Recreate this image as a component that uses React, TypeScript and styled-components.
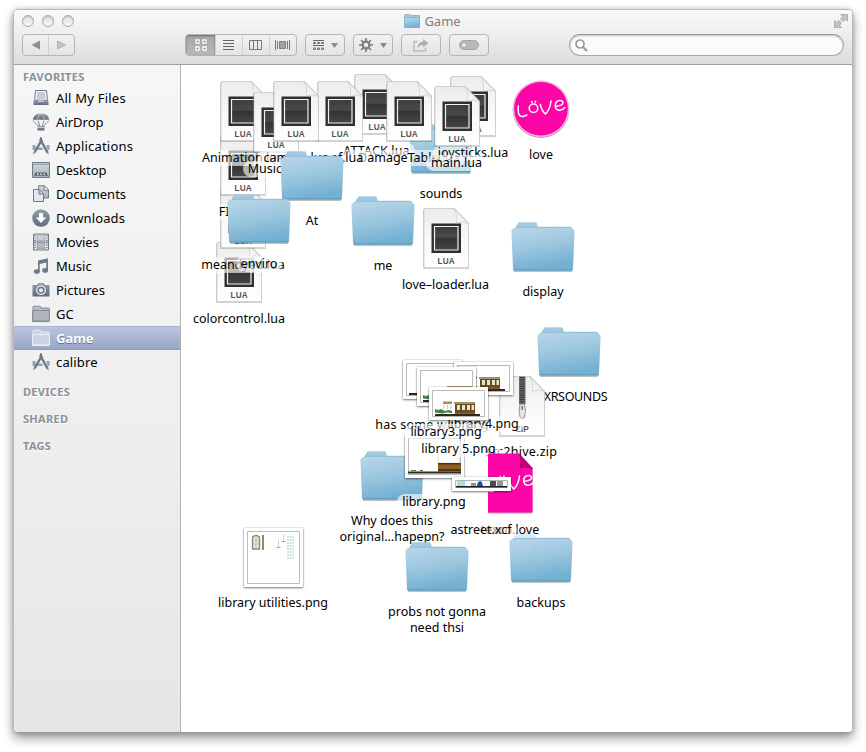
import React from "react";
import styled, { createGlobalStyle, css } from "styled-components";

const Global = createGlobalStyle`
  * { box-sizing: border-box; }
  body { margin: 0; background: #fff; overflow: hidden; font-family: "Noto Sans", "Open Sans", sans-serif; }
  svg { display: block; flex: none; }
`;

const Desktop = styled.div`
  width: 866px;
  height: 752px;
  padding: 9px 13px 19px;
  background: #fff;
`;
const Window = styled.div`
  height: 724px;
  display: flex;
  flex-direction: column;
  border: 1px solid #b9b9b9;
  border-bottom-color: #999;
  border-radius: 5px;
  overflow: hidden;
  box-shadow: 0 5px 11px rgba(0, 0, 0, 0.42), 0 0 4px rgba(0, 0, 0, 0.16);
`;
const Header = styled.header`
  height: 55px;
  flex: none;
  display: flex;
  flex-direction: column;
  background: linear-gradient(#fafafa, #eeeeee 45%, #dcdcdc);
  border-bottom: 1px solid #a0a0a0;
`;
const TitleBar = styled.div`
  height: 24px;
  display: grid;
  grid-template-columns: 1fr auto 1fr;
  align-items: center;
  padding: 0 4px 2px 8px;
`;
const Lights = styled.div`
  display: flex;
  gap: 8px;
`;
const Light = styled.span`
  width: 12px;
  height: 12px;
  border: 1px solid #a9a9a9;
  border-radius: 50%;
  background: linear-gradient(#dedede, #f8f8f8);
  box-shadow: inset 0 1px 1px rgba(0, 0, 0, 0.15);
`;
const Title = styled.div`
  display: flex;
  align-items: center;
  gap: 4px;
  padding-right: 5px;
  font-size: 13px;
  line-height: 16px;
  color: #7e7e7e;
`;
const TitleEnd = styled.div`
  display: flex;
  justify-content: flex-end;
`;
const Toolbar = styled.div`
  display: flex;
  align-items: center;
  height: 22px;
  padding: 0 8px;
`;
const Group = styled.div<{ $w: number; $ml?: number }>`
  width: ${(p) => p.$w}px;
  margin-left: ${(p) => p.$ml ?? 0}px;
  height: 22px;
  display: flex;
  border: 1px solid #b5b5b5;
  border-radius: 4px;
  overflow: hidden;
  background: linear-gradient(#f1f1f1, #e4e4e4);
`;
const Segment = styled.div<{ $on?: boolean }>`
  flex: 1;
  display: flex;
  align-items: center;
  justify-content: center;
  gap: 7px;
  & + & { border-left: 1px solid #cfcfcf; }
  ${(p) =>
    p.$on &&
    css`
      flex: 0 0 29px;
      background: linear-gradient(#a5a5a5, #b9b9b9);
      box-shadow: inset 0 1px 2px rgba(0, 0, 0, 0.35), inset 0 0 1px #777;
    `}
`;
const Search = styled.div`
  width: 275px;
  height: 22px;
  margin-left: auto;
  padding-left: 5px;
  display: flex;
  align-items: center;
  border: 1px solid #a9a9a9;
  border-top-color: #969696;
  border-radius: 11px;
  background: #fbfbfb;
  box-shadow: inset 0 1px 2px rgba(0, 0, 0, 0.22);
`;
const Body = styled.div`
  flex: 1;
  display: flex;
  min-height: 0;
`;
const Sidebar = styled.nav`
  width: 167px;
  flex: none;
  background: linear-gradient(#f6f6f6, #efefef 50%, #e6e6e6);
  border-right: 1px solid #b2b2b2;
`;
const Heading = styled.div<{ $h: number; $pt?: number }>`
  height: ${(p) => p.$h}px;
  padding-top: ${(p) => p.$pt ?? 0}px;
  padding-left: 9px;
  display: flex;
  align-items: center;
  font-size: 11px;
  font-weight: 700;
  letter-spacing: 0.3px;
  color: #8a9097;
  text-shadow: 0 1px 0 #fff;
`;
const Place = styled.div<{ $on?: boolean }>`
  height: 24px;
  padding-left: 18px;
  display: flex;
  align-items: center;
  gap: 6px;
  font-size: 13px;
  line-height: 18px;
  color: #000;
  ${(p) =>
    p.$on &&
    css`
      color: #fff;
      font-weight: 700;
      background: linear-gradient(#bac5df, #98a6c8);
      border-top: 1px solid #a9b5d3;
      border-bottom: 1px solid #8f9ec0;
      text-shadow: 0 1px 1px rgba(0, 0, 0, 0.4);
    `}
`;
const PlaceName = styled.span<{ $ls?: number }>`
  letter-spacing: ${(p) => p.$ls ?? 0}px;
`;
const Canvas = styled.main`
  flex: 1;
  position: relative;
  background: #fff;
`;
const Item = styled.div<{ $x: number; $y: number }>`
  position: absolute;
  left: ${(p) => p.$x - 181 - 70}px;
  top: ${(p) => p.$y - 65 - 32}px;
  width: 140px;
  display: flex;
  flex-direction: column;
  align-items: center;
  gap: 6px;
`;
const Cell = styled.div`
  height: 64px;
  display: flex;
  align-items: center;
`;
const Label = styled.div<{ $ls: number; $indent: number }>`
  margin-left: ${(p) => p.$indent}px;
  padding: 0 5px;
  border-radius: 8px;
  background: rgba(255, 255, 255, 0.62);
  font-size: 12.5px;
  line-height: 16px;
  letter-spacing: ${(p) => p.$ls}px;
  white-space: pre;
  text-align: center;
  color: #000;
`;
const Thumb = styled.div<{ $h: number }>`
  width: 59px;
  height: ${(p) => p.$h}px;
  padding: 3px;
  background: #fff;
  box-shadow: 0 1px 2px rgba(0, 0, 0, 0.5), 0 0 1px rgba(0, 0, 0, 0.4);
`;

const DefsSvg = styled.svg`
  position: absolute;
`;
const Defs = () => (
  <DefsSvg width="0" height="0">
    <defs>
      <linearGradient id="paper" x1="0" y1="0" x2="0" y2="1">
        <stop offset="0" stopColor="#ececec" />
        <stop offset="0.5" stopColor="#f7f7f7" />
        <stop offset="1" stopColor="#ffffff" />
      </linearGradient>
      <linearGradient id="curl" x1="0" y1="1" x2="1" y2="0">
        <stop offset="0" stopColor="#ffffff" />
        <stop offset="0.5" stopColor="#ededed" />
        <stop offset="1" stopColor="#b0b0b0" />
      </linearGradient>
      <linearGradient id="screen" x1="0" y1="0" x2="0" y2="1">
        <stop offset="0" stopColor="#3c3c3c" />
        <stop offset="0.45" stopColor="#4a4a4a" />
        <stop offset="0.5" stopColor="#333333" />
        <stop offset="1" stopColor="#454545" />
      </linearGradient>
      <linearGradient id="front" x1="0" y1="0" x2="0.25" y2="1">
        <stop offset="0" stopColor="#bad7e8" />
        <stop offset="0.5" stopColor="#9cc7df" />
        <stop offset="1" stopColor="#74b0d2" />
      </linearGradient>
      <linearGradient id="back" x1="0" y1="0" x2="0" y2="1">
        <stop offset="0" stopColor="#a5cde3" />
        <stop offset="1" stopColor="#7db4d3" />
      </linearGradient>
      <linearGradient id="steel" x1="0" y1="0" x2="0" y2="1">
        <stop offset="0" stopColor="#929eac" />
        <stop offset="1" stopColor="#5f6b7b" />
      </linearGradient>
      <linearGradient id="mist" x1="0" y1="0" x2="0" y2="1">
        <stop offset="0" stopColor="#d4d8dd" />
        <stop offset="1" stopColor="#a9b0b9" />
      </linearGradient>
    </defs>
  </DefsSvg>
);

const Folder = () => (
  <svg width="64" height="54" viewBox="0 -3 64 54">
    <path d="M3 48.500h58v1H3z" fill="#555" opacity="0.75" />
    <path d="M5 20V4.500q0-1.200 1-1.500l.8-1.800Q7.200.3 8.500.3H24q1.600 0 2 1.200l.8 3.300H59q2 0 2 2V20z" fill="url(#back)" />
    <path d="M.4 9.500q0-1.700 1.600-2Q3.500 5.500 6 5.400h52.500q2 0 2.800 2.100 2.300 0 2.300 2l-1.600 37q-.2 2.200-1.500 2.200H3.500Q2 48.700 2 46.500z" fill="url(#front)" />
    <path d="M1 8.500q1.500-2.700 5-2.900h52q3 .2 5 2.900" fill="none" stroke="#8bbad3" strokeWidth="0.7" />
    <path d="M2.500 47.800h59" stroke="#5f9bbd" strokeWidth="1.100" />
    <g fill="#6f9fbd" opacity="0.4">
      <path d="M9 14h1v1H9zM17 26h1v1h-1zM26 11h1v1h-1zM36 20h1v1h-1zM49 14h1v1h-1zM56 28h1v1h-1zM44 33h1v1h-1zM30 38h1v1h-1zM12 38h1v1h-1zM53 42h1v1h-1z" />
    </g>
  </svg>
);

const PAGE = "M1 1.500Q1 .5 2 .5h29.500L45.500 15v43.500q0 1-1 1H2q-1 0-1-1z";
const Shade = () => (
  <path d={PAGE} transform="translate(0 1)" fill="none" stroke="#000" strokeOpacity="0.18" strokeWidth="2" />
);
const Curl = () => (
  <path d="M31 .6Q34.500 6 33.500 15 39 12.500 45.300 15.500z" fill="url(#curl)" stroke="#bdbdbd" strokeWidth="0.5" />
);
const DocText = styled.text`
  font-family: "Liberation Sans", sans-serif;
  font-weight: 700;
  font-size: 8.2px;
  letter-spacing: 0.2px;
  fill: #555;
`;
const Lua = () => (
  <svg width="46" height="61" viewBox="0 0 46 61">
    <Shade />
    <path d={PAGE} fill="url(#paper)" stroke="#c4c4c4" strokeWidth="0.7" />
    <path d="M8.500 15.500h29.500v29.500h-29.500z" fill="#2f2f2f" />
    <path d="M11.500 18.500h23.500v23.500H11.500z" fill="url(#screen)" stroke="#f0f0f0" strokeWidth="1.200" />
    <Curl />
    <DocText x="23.200" y="55.500" textAnchor="middle">LUA</DocText>
  </svg>
);
const Zip = () => (
  <svg width="46" height="61" viewBox="0 0 46 61">
    <Shade />
    <path d={PAGE} fill="url(#paper)" stroke="#c4c4c4" strokeWidth="0.7" />
    <path d="M20 .5h6.500V28H20z" fill="#707070" />
    <path d="M23.200 1v27" stroke="#3d3d3d" strokeWidth="5" strokeDasharray="1.200 1" />
    <path d="M21 28h4.500l1 7.500-1 6q-2.200 2-4.400 0l-1-6z" fill="#e6e6e6" stroke="#888" strokeWidth="0.9" />
    <path d="M23.200 30v4" stroke="#777" strokeWidth="1.500" />
    <Curl />
    <DocText x="23.200" y="55.500" textAnchor="middle">ZIP</DocText>
  </svg>
);
const LoveMark = () => (
  <g fill="none" stroke="#fff" strokeWidth="1.500" strokeLinecap="round" strokeLinejoin="round">
    <path d="M6.300 27q-.8 9 2.500 10.300 2.500.8 6-1.300" />
    <circle cx="21.500" cy="29.300" r="4.300" />
    <path d="M19.800 22.800v.2M23.400 22.500v.2" strokeWidth="1.900" />
    <path d="M28.300 25.500q2 7.500 5.200 9.500 4.500-4.500 5.500-13M43.500 27.300q7.500-.5 7.500-3.800-.5-2.300-3.500-2-4.500.8-4.300 5.300.5 4.700 4.800 4.400 2.800-.2 4.800-2.600" />
  </g>
);
const LoveBall = () => (
  <svg width="58" height="60" viewBox="0 0 58 60">
    <circle cx="29" cy="30.600" r="28.300" fill="#bd8fac" />
    <circle cx="29" cy="29.800" r="28.300" fill="#f3b6dc" />
    <circle cx="29" cy="29.800" r="26.800" fill="#fd05a6" />
    <LoveMark />
  </svg>
);
const LoveDoc = () => (
  <svg width="46" height="61" viewBox="0 0 46 61">
    <path d={PAGE} transform="translate(0 1)" fill="#c79ab5" />
    <path d={PAGE} fill="#fd05a6" />
    <g transform="translate(-6.500 1)"><LoveMark /></g>
    <path d="M32 .5Q35 6 33 15q6-2 12.500.5z" fill="#c4007f" stroke="#92005e" strokeWidth="0.6" />
  </svg>
);

type Scene = "full" | "near" | "bare";
const Street = ({ h, scene }: { h: number; scene: Scene }) => (
  <svg width="53" height={h} viewBox={`0 0 53 ${h}`}>
    <path d={`M.5.5h52v${h - 1}H.5z`} fill="#fff" stroke="#b9b9b9" />
    <g transform={`translate(0 ${h - 28})`}>
      {scene !== "bare" && (
        <>
          <path d={scene === "near" ? "M27 12h25v10H27z" : "M23 14h20v11H23z"} fill="#6b4a1d" />
          <path d={scene === "near" ? "M27 11h25v2H27z" : "M22 13h21v2H22z"} fill="#a58f6b" />
          <path d="M25 16h3v5h-3zM30 16h3v5h-3zM35 16h3v5h-3zM39.500 16h2.500v5h-2.500z" fill="#dfe5d8" />
          <path d="M11 12.500h9v2.500h-9z" fill="#a58f6b" />
          <path d="M12 16v4M15.500 16v4M19 16v4" stroke="#c3cfb9" />
          <path d="M3 20l3 1 3-1 4 2 4-1 3 1v2l-5-.5-5 1-7-1z" fill="#3f8748" />
          <path d="M23 23.500h20v1.500H23z" fill="#8d5e22" />
        </>
      )}
      <path d="M3 25h45v2H3z" fill="#2e2723" />
    </g>
  </svg>
);
const Shop = () => (
  <svg width="53" height="37" viewBox="0 0 53 37">
    <path d="M.5.5h52v36H.5z" fill="#fff" stroke="#b9b9b9" />
    <path d="M30 15h21v10H30z" fill="#fff" stroke="#e2ddd5" />
    <path d="M30 26h23v5H30z" fill="#8d5e22" />
    <path d="M30 25h23v1.500H30zM30 31h23v2.500H30z" fill="#4f3514" />
    <path d="M0 33.500h53v2H0z" fill="#2e2723" />
    <path d="M3 32.500h5M12 32.500h3" stroke="#51744f" />
  </svg>
);
const Strip = () => (
  <svg width="53" height="8" viewBox="0 0 53 8">
    <path d="M.5.500h52v7H.5z" fill="#f4fbfb" stroke="#b4b4b4" />
    <path d="M2 1h8v5H2z" fill="#a8e0e4" />
    <path d="M16 3h5v3h-5z" fill="#8a9a9a" />
    <path d="M23 2l3-1 1 2 1 3h-6z" fill="#164f9b" />
    <path d="M35 1h6v5h-6z" fill="#4c4c4c" />
    <path d="M42 1h6v5h-6z" fill="#8b9b90" />
    <path d="M1 6h51v1.500H1z" fill="#252525" />
  </svg>
);
const Parts = () => (
  <svg width="53" height="53" viewBox="0 0 53 53">
    <path d="M.5.500h52v52H.5z" fill="#fff" stroke="#bdbdbd" />
    <path d="M5.500 18V6q3.500-3 7 0v12z" fill="#dceae2" stroke="#94866b" strokeWidth="1.300" />
    <path d="M9 5v13M6 9h6M6 13h6" stroke="#a9bcae" strokeWidth="0.700" />
    <path d="M15 4h2v15h-2z" fill="#9a8766" />
    <path d="M36.500 3v7M31.500 9v7" stroke="#d4d4d4" />
    <path d="M34.500 10h4v1h-4zM29.500 16h4v1h-4z" fill="#b2a78f" />
    <path d="M41 5v24M43.500 5v24M46 5v24" stroke="#c6dcd3" strokeWidth="1.500" strokeDasharray="2 1" />
  </svg>
);

/* Sidebar glyphs, 18 by 18 */
const Glyph = ({ children }: { children: React.ReactNode }) => (
  <svg width="18" height="18" viewBox="0 0 18 18">{children}</svg>
);
const S = "#6e7a8a";
const glyphs: Record<string, React.ReactNode> = {
  files: (
    <>
      <path d="M3.500 1.500h11l1 10h-13z" fill="#f2f3f5" stroke={S} />
      <path d="M5 4h8M5 6h8M4.700 8h8.600M4.500 10h9" stroke="#8b95a2" strokeWidth="0.800" />
      <path d="M1.500 11.500h15V16h-15z" fill="url(#steel)" />
      <path d="M6 11.500h6v1.300H6z" fill="#dfe2e6" />
    </>
  ),
  airdrop: (
    <>
      <path d="M.8 7Q1 .8 9 .6q8 .2 8.200 6.400-1.300-1-2.600 0-1.300-1-2.600 0-1.500-1-3 0-1.500-1-3 0-1.300-1-2.600 0-1.300-1-2.600 0z" fill="url(#steel)" />
      <path d="M5.500 6.500Q6 2.500 9 1M12.500 6.500Q12 2.500 9 1" stroke="#c5cbd2" fill="none" strokeWidth="0.800" />
      <path d="M1 7.500l6 6M17 7.500l-6 6M6 7.500l2 6M12 7.500l-2 6" stroke={S} strokeWidth="0.900" />
      <path d="M5.500 13h7v4.500h-7z" fill="url(#steel)" />
      <path d="M5.500 14.500h7" stroke="#c8cdd4" />
    </>
  ),
  apps: (
    <>
      <path d="M.5 8h3v2.500h11V8h3v5h-17z" fill="#98a2ae" />
      <path d="M9 3.500L14.500 15" stroke="#f3f3f3" strokeWidth="4.200" />
      <path d="M10 2.500l-7.500 13" stroke={S} strokeWidth="2.500" />
      <path d="M8 2l7.500 13.500" stroke={S} strokeWidth="2.500" />
      <path d="M8 .3h2V4H8zM1.500 15l1.500 1-1.800 1.500zM16 15l1 2.500-2.500-1.500z" fill={S} />
    </>
  ),
  desktop: (
    <>
      <path d="M.5 1.500h17v15H.5z" fill="url(#mist)" stroke={S} />
      <path d="M1 3.300h16" stroke="#8d97a3" />
      <path d="M3.500 11.500h11l1.500 3.300H2z" fill="#566374" />
      <path d="M5 12.500h1.500v1.500H5zM8.200 12.500h1.500v1.500H8.200zM11.500 12.500h1.500v1.500h-1.500z" fill="#e8eaed" />
    </>
  ),
  docs: (
    <>
      <path d="M6.500.8h6l4 4V13h-10z" fill="url(#mist)" stroke={S} />
      <path d="M12 1v4.300h4.300" fill="#eee" stroke={S} />
      <path d="M1.500 4.500h6l4 4v8h-10z" fill="#e4e7ea" stroke={S} />
      <path d="M7 4.700v4.300h4.300" fill="#c2c8cf" stroke={S} />
    </>
  ),
  downloads: (
    <>
      <circle cx="9" cy="9" r="8.800" fill="url(#steel)" />
      <path d="M7 4h4v4.500h3.200L9 14 3.800 8.500H7z" fill="#fff" />
    </>
  ),
  movies: (
    <>
      <path d="M1.500 1h15v16h-15z" fill="#f1f2f4" stroke={S} />
      <path d="M5 2h8v6H5zM5 10h8v6H5z" fill="url(#mist)" stroke="#8c96a3" strokeWidth="0.700" />
      <path d="M3 2v15M15 2v15" stroke={S} strokeWidth="1.500" strokeDasharray="1.200 1.200" />
      <path d="M1.500 9h15" stroke={S} />
    </>
  ),
  music: (
    <>
      <path d="M6 3.500l10-2.200v12h-1.700V5.600L7.700 7v7.500H6z" fill={S} />
      <ellipse cx="4.800" cy="14.500" rx="3" ry="2.300" fill={S} />
      <ellipse cx="13.200" cy="13.400" rx="3" ry="2.300" fill={S} />
    </>
  ),
  pictures: (
    <>
      <path d="M1 4h4l1.500-2h5L13 4h4q.5 0 .5.500V15q0 .6-.6.600H1.100q-.6 0-.6-.6V4.500Q.5 4 1 4z" fill="url(#steel)" />
      <circle cx="9" cy="9.200" r="4.900" fill="#eceef0" />
      <circle cx="9" cy="9.200" r="3.600" fill={S} />
      <circle cx="9" cy="9.200" r="2" fill="#eceef0" />
    </>
  ),
  folder: (
    <>
      <path d="M1 3.500V2q0-.8.8-.8h6q.8 0 1 .8l.2 1h7.500q.8 0 .8.800V16q0 .6-.6.600H.9q-.6 0-.6-.6z" fill="#b6bbc2" stroke="#7d8794" strokeWidth="0.900" />
      <path d="M.7 5.500h16.600V16H.7z" fill="#b1b4b9" stroke="#7d8794" strokeWidth="0.900" />
    </>
  ),
  open: (
    <>
      <path d="M1 3.500V2q0-.8.8-.8h6q.8 0 1 .8l.2 1h7.500q.8 0 .8.800V16q0 .6-.6.600H.9q-.6 0-.6-.6z" fill="#cdd5e5" stroke="#eef1f7" strokeWidth="0.900" />
      <path d="M.7 5.500h16.600V16H.7z" fill="#cbd2e0" stroke="#f0f3f8" strokeWidth="0.900" />
    </>
  ),
};

const places: { name: string; icon: string; on?: boolean; ls?: number }[] = [
  { name: "All My Files", icon: "files", ls: 0.22 },
  { name: "AirDrop", icon: "airdrop" },
  { name: "Applications", icon: "apps", ls: 0.2 },
  { name: "Desktop", icon: "desktop" },
  { name: "Documents", icon: "docs" },
  { name: "Downloads", icon: "downloads", ls: 0.1 },
  { name: "Movies", icon: "movies" },
  { name: "Music", icon: "music" },
  { name: "Pictures", icon: "pictures" },
  { name: "GC", icon: "folder" },
  { name: "Game", icon: "open", on: true },
  { name: "calibre", icon: "apps", ls: 0.15 },
];

const street = (h: number, scene: Scene) => (
  <Thumb $h={h}><Street h={h - 6} scene={scene} /></Thumb>
);

type Entry = { x: number; y: number; icon: React.ReactNode; name: string; ls?: number; indent?: number };
/* Icon centres, listed from the bottom of the pile to the top */
const entries: Entry[] = [
  { x: 239, y: 272.5, icon: <Lua />, name: "colorcontrol.lua" },
  { x: 243, y: 218.5, icon: <Lua />, name: "meandyed.lua" },
  { x: 243, y: 165.5, icon: <Lua />, name: "FIyer.lua" },
  { x: 243, y: 111.5, icon: <Lua />, name: "Animation.lua" },
  { x: 275.5, y: 122.5, icon: <Lua />, name: "Music.lua" },
  { x: 441, y: 148, icon: <Folder />, name: "sounds" },
  { x: 376.5, y: 104.5, icon: <Lua />, name: "ATTACK.lua", ls: 0.15 },
  { x: 409, y: 111.5, icon: <Lua />, name: "DamageTable.lua" },
  { x: 340, y: 111.5, icon: <Lua />, name: "conf.lua" },
  { x: 296, y: 111.5, icon: <Lua />, name: "camera.lua" },
  { x: 473, y: 106.5, icon: <Lua />, name: "joysticks.lua" },
  { x: 456.5, y: 116.5, icon: <Lua />, name: "main.lua" },
  { x: 312, y: 175, icon: <Folder />, name: "At" },
  { x: 259, y: 218, icon: <Folder />, name: "enviro" },
  { x: 541, y: 109, icon: <LoveBall />, name: "love" },
  { x: 383, y: 220, icon: <Folder />, name: "me" },
  { x: 445.5, y: 238.5, icon: <Lua />, name: "love–loader.lua" },
  { x: 543, y: 246, icon: <Folder />, name: "display" },
  { x: 569, y: 351, icon: <Folder />, name: "XRSOUNDS", ls: -0.35, indent: 13 },
  { x: 521.5, y: 406, icon: <Zip />, name: "src2hive.zip", ls: 0.25 },
  { x: 392, y: 475, icon: <Folder />, name: "Why does this\noriginal…hapepn?" },
  { x: 434, y: 456, icon: <Thumb $h={43}><Shop /></Thumb>, name: "library.png" },
  { x: 432, y: 379, icon: street(39, "bare"), name: "has some wall.png", ls: 0.25 },
  { x: 483, y: 378, icon: street(33, "full"), name: "library4.png" },
  { x: 446, y: 386, icon: street(39, "near"), name: "library3.png" },
  { x: 458.5, y: 403, icon: street(33, "full"), name: "library 5.png" },
  { x: 541, y: 557, icon: <Folder />, name: "backups" },
  { x: 510, y: 483.5, icon: <LoveDoc />, name: "texco.love" },
  { x: 481, y: 484, icon: <Thumb $h={14}><Strip /></Thumb>, name: "astreet.xcf" },
  { x: 437, y: 566, icon: <Folder />, name: "probs not gonna\nneed thsi" },
  { x: 273, y: 557, icon: <Thumb $h={59}><Parts /></Thumb>, name: "library utilities.png" },
];

const Down = () => (
  <svg width="7" height="5" viewBox="0 0 7 5"><path d="M0 0h7L3.500 5z" fill="#8b8b8b" /></svg>
);

export default function App() {
  return (
    <>
      <Global />
      <Defs />
      <Desktop>
        <Window>
          <Header>
            <TitleBar>
              <Lights><Light /><Light /><Light /></Lights>
              <Title>
                <svg width="16" height="14" viewBox="0 0 16 14">
                  <path d="M.5 13V1.500Q.5.500 1.500.5h4q.8 0 1 1h8.500q.5 0 .5.500v11z" fill="#a3cade" stroke="#88b3ca" strokeWidth="0.900" />
                  <path d="M.5 3.500h15v10H.5z" fill="url(#front)" stroke="#83aec5" strokeWidth="0.800" />
                </svg>
                Game
              </Title>
              <TitleEnd>
                <svg width="14" height="14" viewBox="0 0 14 14">
                  <path d="M6.500.5h7v7l-2-2-2.500 2L6.500 5l2-2.500zM.5 6.500L2.700 8.500 5 6.500 7.500 9l-2 2.500 2 2h-7z" fill="#c3c3c3" stroke="#a0a0a0" strokeWidth="0.700" />
                </svg>
              </TitleEnd>
            </TitleBar>
            <Toolbar>
              <Group $w={53}>
                <Segment><svg width="9" height="10" viewBox="0 0 9 10"><path d="M9 .500v9L.5 5z" fill="#8c8c8c" /></svg></Segment>
                <Segment><svg width="9" height="10" viewBox="0 0 9 10"><path d="M.5 1v8L8.500 5z" fill="#c2c2c2" stroke="#a9a9a9" strokeWidth="0.700" /></svg></Segment>
              </Group>
              <Group $w={112} $ml={110}>
                <Segment $on>
                  <svg width="12" height="12" viewBox="0 0 12 12"><path d="M1 1h3v3H1zM8 1h3v3H8zM1 8h3v3H1zM8 8h3v3H8z" fill="#777" stroke="#fff" strokeWidth="1.300" /></svg>
                </Segment>
                <Segment>
                  <svg width="13" height="11" viewBox="0 0 13 11"><path d="M0 .5h11M0 3.500h11M0 6.500h11M0 9.500h11" stroke="#666" /></svg>
                </Segment>
                <Segment>
                  <svg width="15" height="11" viewBox="0 0 15 11"><path d="M.5.500h12v9H.5zM4.500.5v9M8.500.5v9" fill="none" stroke="#777" /></svg>
                </Segment>
                <Segment>
                  <svg width="17" height="11" viewBox="0 0 17 11"><path d="M.5 0v10M2.500 1v8M12.500 1v8M14.500 0v10" stroke="#777" /><path d="M4.500 1.500h6v7h-6z" fill="#a2a2a2" stroke="#808080" /></svg>
                </Segment>
              </Group>
              <Group $w={40} $ml={8}>
                <Segment>
                  <svg width="11" height="11" viewBox="0 0 11 11"><path d="M0 .5h11M0 5.500h11" stroke="#666" /><path d="M.5 2.500h2v1h-2zM4.500 2.500h2v1h-2zM8.500 2.500h2v1h-2zM.5 8h2v1.500h-2zM4.500 8h2v1.500h-2zM8.500 8h2v1.500h-2z" fill="none" stroke="#666" strokeWidth="0.900" /></svg>
                  <Down />
                </Segment>
              </Group>
              <Group $w={40} $ml={8}>
                <Segment>
                  <svg width="14" height="14" viewBox="0 0 14 14">
                    <g stroke="#7b7b7b" fill="none">
                      <circle cx="7" cy="7" r="3.400" strokeWidth="2.200" />
                      <path d="M7 0v3M7 11v3M0 7h3M11 7h3M2 2l2.200 2.200M9.800 9.800L12 12M12 2L9.800 4.200M4.200 9.800L2 12" strokeWidth="1.700" />
                    </g>
                  </svg>
                  <Down />
                </Segment>
              </Group>
              <Group $w={40} $ml={8}>
                <Segment>
                  <svg width="16" height="13" viewBox="0 0 16 13">
                    <path d="M5 2.500H1v9.500h11.500V8.500" fill="none" stroke="#bdbdbd" strokeWidth="1.600" />
                    <path d="M10 0l5.500 4.200L10 8.200V6Q6.500 6 4.500 9.500 4.500 3 10 2.500z" fill="#b0b0b0" />
                  </svg>
                </Segment>
              </Group>
              <Group $w={40} $ml={8}>
                <Segment>
                  <svg width="20" height="10" viewBox="0 0 20 10">
                    <rect x="0.500" y="0.500" width="19" height="9" rx="4.500" fill="#b9b9b9" stroke="#a4a4a4" />
                    <circle cx="5" cy="5" r="2.300" fill="#ededed" stroke="#9f9f9f" strokeWidth="0.600" />
                  </svg>
                </Segment>
              </Group>
              <Search>
                <svg width="13" height="13" viewBox="0 0 13 13"><circle cx="5" cy="5" r="4" fill="none" stroke="#9a9a9a" strokeWidth="1.700" /><path d="M8 8l4 4" stroke="#9a9a9a" strokeWidth="2.200" /></svg>
              </Search>
            </Toolbar>
          </Header>
          <Body>
            <Sidebar>
              <Heading $h={21} $pt={2}>FAVORITES</Heading>
              {places.map((p) => (
                <Place key={p.name} $on={p.on}>
                  <Glyph>{glyphs[p.icon]}</Glyph>
                  <PlaceName $ls={p.ls}>{p.name}</PlaceName>
                </Place>
              ))}
              <Heading $h={35}>DEVICES</Heading>
              <Heading $h={19}>SHARED</Heading>
              <Heading $h={35}>TAGS</Heading>
            </Sidebar>
            <Canvas>
              {entries.map((e) => (
                <Item key={e.name} $x={e.x} $y={e.y}>
                  <Cell>{e.icon}</Cell>
                  <Label $ls={e.ls ?? 0} $indent={e.indent ?? 0}>{e.name}</Label>
                </Item>
              ))}
            </Canvas>
          </Body>
        </Window>
      </Desktop>
    </>
  );
}
